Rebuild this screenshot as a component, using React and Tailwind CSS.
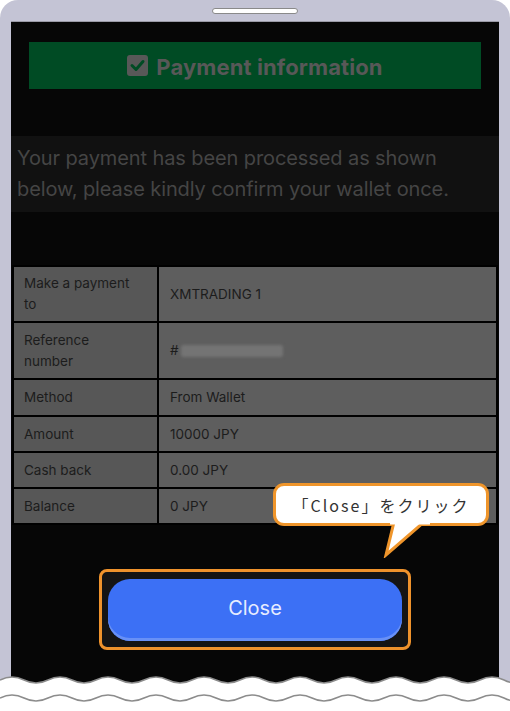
import React from 'react'

const rows = [
  { label: 'Make a payment to', value: 'XMTRADING 1', h: 'h-[54px]' },
  { label: 'Reference number', value: 'ref', h: 'h-[55px]' },
  { label: 'Method', value: 'From Wallet', h: 'h-[35px]' },
  { label: 'Amount', value: '10000 JPY', h: 'h-[34px]' },
  { label: 'Cash back', value: '0.00 JPY', h: 'h-[34px]' },
  { label: 'Balance', value: '0 JPY', h: 'h-[34px]' },
]

const wave = (y) => {
  let d = `M0 ${y} q12 -6 24 0`
  for (let i = 0; i < 22; i++) d += ' t24 0'
  return d
}

const App = () => {
  return (
    <div className="relative w-[510px] h-[711px] bg-white overflow-hidden font-['Inter','Noto_Sans_CJK_JP',sans-serif]">
      {/* device frame */}
      <div className="h-[690px] bg-[#c4c4d5] rounded-t-[18px] px-[11px] pt-[21px] relative">
        <div className="absolute left-[212px] top-[8px] w-[86px] h-[6px] rounded-full bg-white border border-[#8a8a8a]" />
        <div className="h-full bg-[#060606] border-t border-[#9a9aa6] flex flex-col">
          <div className="px-[18px] pt-[20px]">
            <div className="h-[47px] bg-[#004b24] flex items-center justify-center gap-[8px]">
              <svg width="21" height="21" viewBox="0 0 21 21">
                <rect x="0" y="0" width="21" height="21" rx="3" fill="#585858" />
                <path d="M5 10.5 L9 14.5 L16 6.5" stroke="#004b24" strokeWidth="3" fill="none" strokeLinecap="round" strokeLinejoin="round" />
              </svg>
              <span className="text-[22px] font-bold text-[#585858] tracking-[0.1px] leading-none pt-[2px]">Payment information</span>
            </div>
          </div>
          <div className="mt-[47px] bg-[#111111] px-[6px] pt-[7px] h-[76px]">
            <p className="text-[20px] leading-[31px] text-[#454545] tracking-[-0.1px]">
              Your payment has been processed as shown below, please kindly confirm your wallet once.
            </p>
          </div>
          <div className="mt-[53px] mx-px">
            <div className="border-2 border-black bg-black flex flex-col gap-[2px]">
              {rows.map((r) => (
                <div key={r.label} className={`flex gap-[2px] ${r.h}`}>
                  <div className="w-[143px] bg-[#575757] px-[10px] flex items-center text-[13.5px] leading-[21px] text-[#1c1c1c]">
                    {r.label === 'Make a payment to' ? (
                      <span>Make a payment<br />to</span>
                    ) : r.label === 'Reference number' ? (
                      <span>Reference<br />number</span>
                    ) : (
                      r.label
                    )}
                  </div>
                  <div className="flex-1 bg-[#5e5e5e] px-[11px] flex items-center text-[13.5px] text-[#1c1c1c]">
                    {r.value === 'ref' ? (
                      <span className="flex items-center">
                        #<span className="ml-[2px] w-[102px] h-[12px] bg-[#747474] rounded-[2px] blur-[1.5px]" />
                      </span>
                    ) : (
                      r.value
                    )}
                  </div>
                </div>
              ))}
            </div>
          </div>
          <div className="mt-[44px] flex justify-center">
            <div className="w-[312px] h-[81px] rounded-[8px] border-[3px] border-[#ee922c] bg-[#141414] flex items-center justify-center">
              <div className="w-[294px] h-[62px] rounded-[22px] bg-[#3c70f5] shadow-[inset_0_-3px_0_#6890f6] flex items-center justify-center pb-[3px] text-[20px] text-[#e6ecff]">
                Close
              </div>
            </div>
          </div>
        </div>
      </div>

      {/* callout */}
      <div className="absolute left-[273px] top-[483px] w-[216px] h-[43px] rounded-[11px] border-[3px] border-[#ef952b] bg-white flex items-center justify-center text-[16px] text-[#333] tracking-[2px] font-['Noto_Sans_CJK_JP',sans-serif]">
        「Close」をクリック
      </div>
      <svg className="absolute left-[380px] top-[522px]" width="60" height="36" viewBox="0 0 60 36">
        <path d="M14 0 L6 33 L44 0 Z" fill="white" stroke="#ef952b" strokeWidth="3" strokeLinejoin="miter" />
        <rect x="10" y="0" width="40" height="2.5" fill="white" />
      </svg>

      {/* torn bottom edge */}
      <svg className="absolute left-0 top-[668px]" width="510" height="43" viewBox="0 0 510 43">
        <path d={`${wave(12)} L520 43 L0 43 Z`} fill="white" />
        <path d={wave(12)} fill="none" stroke="#8c8c8c" strokeWidth="1.5" />
        <path d={wave(30)} fill="none" stroke="#8c8c8c" strokeWidth="1.5" />
      </svg>
    </div>
  )
}

export default App
